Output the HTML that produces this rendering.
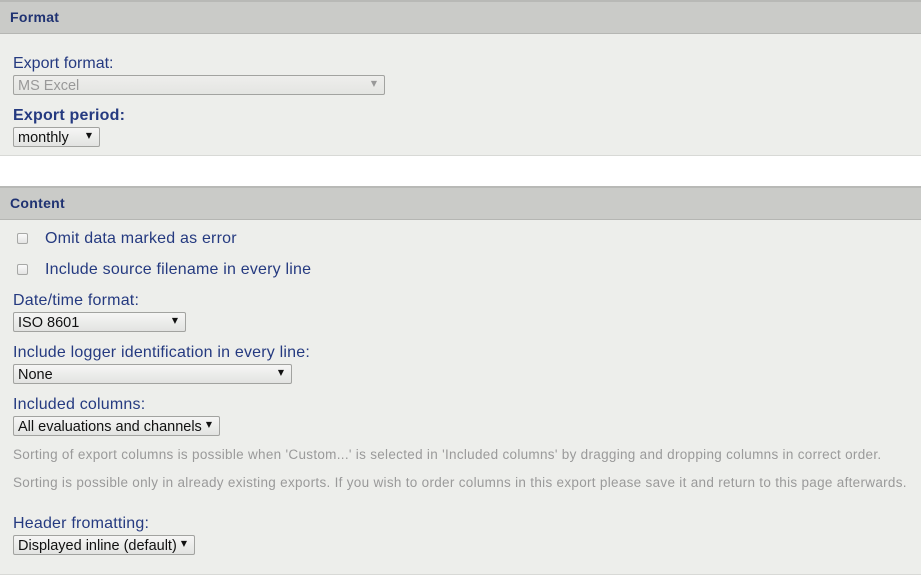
<!DOCTYPE html>
<html><head><meta charset="utf-8"><style>
*{margin:0;padding:0;box-sizing:border-box}
body{width:921px;height:575px;background:#fff;font-family:"Liberation Sans",Arial,sans-serif;position:relative;overflow:hidden}
.hd{position:absolute;left:0;width:921px;height:34px;background:#cacbc8;border-top:2px solid #b8b9b6;border-bottom:1px solid #b5b6b3;color:#1f3272;font-weight:bold;font-size:14px;padding:7px 0 0 10px;letter-spacing:0.3px}
.pn{position:absolute;left:0;width:921px;background:#edeeeb;border-bottom:1px solid #d8d9d6}
.a{position:absolute;white-space:nowrap}
.lb{color:#253a80;font-size:16px;letter-spacing:0.2px}
.sel{position:absolute;height:20px;border:1px solid #a2a3a0;border-radius:2px;background:linear-gradient(#f6f6f5,#e2e3e1);font-size:14.5px;line-height:17px;color:#111;padding:2px 0 0 4px;white-space:nowrap}
.sel:after{content:"▼";position:absolute;right:7px;top:4px;font-size:8px;line-height:8px;font-family:"DejaVu Sans",sans-serif}
.cb{position:absolute;left:17px;width:11px;height:11px;border:1px solid #a7a8a6;border-radius:2px;background:linear-gradient(#fafafa,#e4e4e3)}
.help{color:#9a9a9a;font-size:13.5px;letter-spacing:0.3px}
</style></head><body>
<div class="hd" style="top:0">Format</div>
<div class="pn" style="top:34px;height:122px"></div>
<div class="a lb" style="left:13px;top:55px;letter-spacing:0">Export format:</div>
<div class="sel" style="left:13px;top:75px;width:372px;color:#999;background:linear-gradient(#eeeeec,#e4e5e2)">MS Excel</div>
<div class="a lb" style="left:13px;top:107px;font-weight:bold;font-size:16px">Export period:</div>
<div class="sel" style="left:13px;top:127px;width:87px">monthly</div>

<div class="hd" style="top:186px">Content</div>
<div class="pn" style="top:220px;height:355px"></div>
<div class="cb" style="top:233px"></div>
<div class="a lb" style="left:45px;top:230px">Omit data marked as error</div>
<div class="cb" style="top:264px"></div>
<div class="a lb" style="left:45px;top:261px">Include source filename in every line</div>
<div class="a lb" style="left:13px;top:292px">Date/time format:</div>
<div class="sel" style="left:13px;top:312px;width:173px">ISO 8601</div>
<div class="a lb" style="left:13px;top:344px">Include logger identification in every line:</div>
<div class="sel" style="left:13px;top:364px;width:279px">None</div>
<div class="a lb" style="left:13px;top:396px">Included columns:</div>
<div class="sel" style="left:13px;top:416px;width:207px">All evaluations and channels</div>
<div class="a help" style="left:13px;top:447px">Sorting of export columns is possible when 'Custom...' is selected in 'Included columns' by dragging and dropping columns in correct order.</div>
<div class="a help" style="left:13px;top:475px">Sorting is possible only in already existing exports. If you wish to order columns in this export please save it and return to this page afterwards.</div>
<div class="a lb" style="left:13px;top:515px">Header fromatting:</div>
<div class="sel" style="left:13px;top:535px;width:182px">Displayed inline (default)</div>
</body></html>
